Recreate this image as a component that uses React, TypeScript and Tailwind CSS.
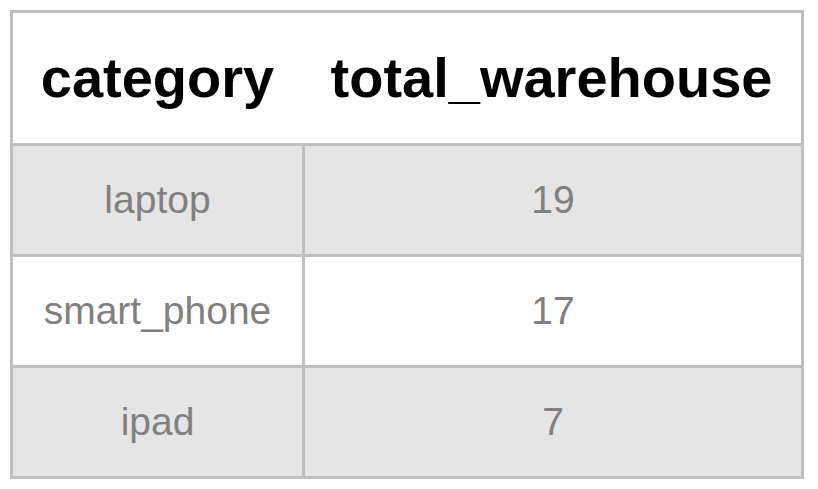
const rows = [
  { category: 'laptop', total: 19 },
  { category: 'smart_phone', total: 17 },
  { category: 'ipad', total: 7 },
];

export default function App() {
  return (
    <div className="w-[818px] h-[489px] bg-white pt-[10px] pl-[10px] font-['Liberation_Sans',Arial,sans-serif]">
      <div className="w-[794px] border-[3px] border-[#bfbfbf]">
        <div className="flex h-[133px] border-b-[3px] border-[#bfbfbf] bg-white">
          <div className="w-[289px] flex items-center justify-center text-[56px] font-bold text-black">
            category
          </div>
          <div className="flex-1 flex items-center justify-center text-[56px] font-bold text-black">
            total_warehouse
          </div>
        </div>
        {rows.map((row, i) => (
          <div
            key={row.category}
            className={
              'flex h-[108px] ' +
              (i % 2 === 0 ? 'bg-[#e5e5e5] ' : 'bg-white ') +
              (i < rows.length - 1 ? 'box-content border-b-[3px] border-[#bfbfbf]' : '')
            }
          >
            <div className="w-[292px] border-r-[3px] border-[#bfbfbf] flex items-center justify-center text-[39px] text-[#808080]">
              {row.category}
            </div>
            <div className="flex-1 flex items-center justify-center text-[39px] text-[#808080]">
              {row.total}
            </div>
          </div>
        ))}
      </div>
    </div>
  );
}
